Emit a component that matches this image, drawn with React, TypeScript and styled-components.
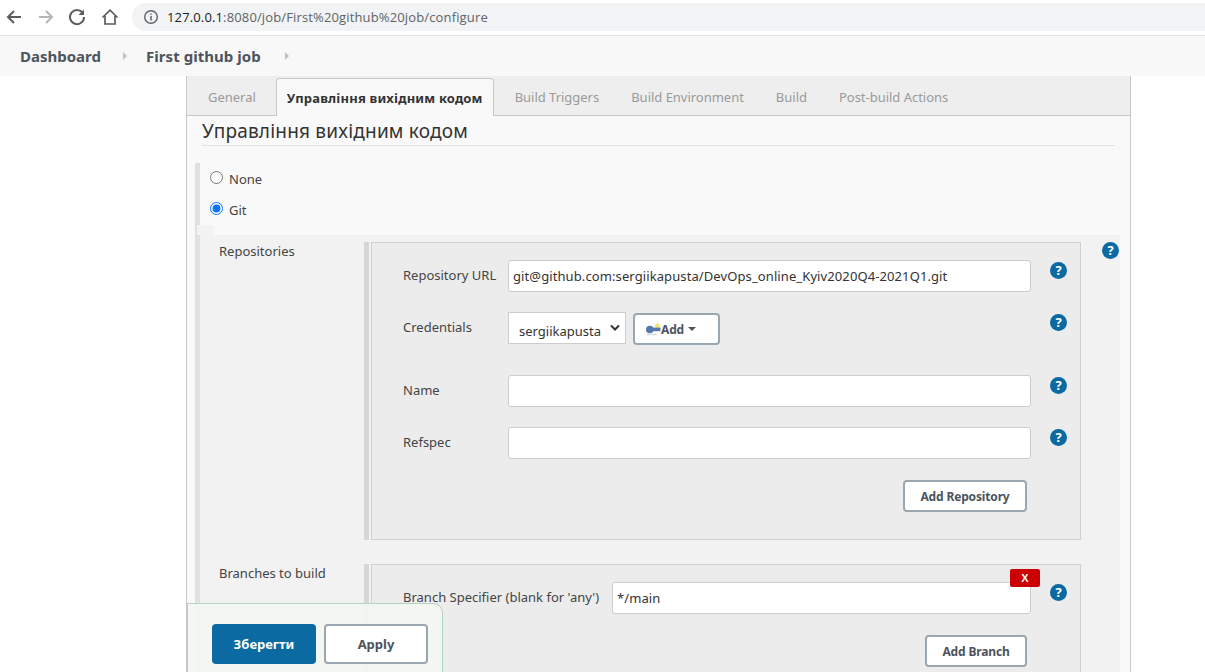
import React from "react";
import styled, { createGlobalStyle } from "styled-components";

const Global = createGlobalStyle`
  html, body { margin: 0; padding: 0; background: #fff; overflow: hidden; }
  * { box-sizing: border-box; }
  body { font-family: "Noto Sans", "Open Sans", Arial, sans-serif; color: #333; }
`;
const Page = styled.div`width: 1205px; height: 672px; overflow: hidden; position: relative; display: flex; flex-direction: column;`;
const BrowserBar = styled.div`height: 36px; flex: none; display: flex; align-items: center; background: #fff; border-bottom: 1px solid #dfe1e3; padding: 0 0 1px 4px;`;
const NavIcon = styled.svg`width: 20px; height: 20px; flex: none; margin-right: ${p => p.$gap}px; fill: none; stroke: ${p => p.$dim ? "#b4b7ba" : "#5a5d60"}; stroke-width: 2;`;
const Address = styled.div`flex: 1; height: 28px; background: #f1f3f4; border-radius: 14px 0 0 14px; display: flex; align-items: center; padding-left: 11px; font-family: "Open Sans", sans-serif; font-size: 13px; letter-spacing: .14px; color: #5f6368; margin-left: 2px;`;
const InfoIcon = styled.svg`width: 16px; height: 16px; margin-right: 8px; flex: none;`;
const Host = styled.span`color: #202124;`;
const Crumbs = styled.div`height: 40px; flex: none; background: #f8f8f8; display: flex; align-items: center; padding-left: 20px; font-size: 15px; font-weight: 700; color: #4d545d;`;
const Crumb = styled.span`margin-right: ${p => p.$gap}px; letter-spacing: ${p => p.$ls || 0}px;`;
const Caret = styled.i`width: 0; height: 0; border-left: 4px solid #c2c2c2; border-top: 4px solid transparent; border-bottom: 4px solid transparent; margin-right: ${p => p.$gap}px;`;
const Main = styled.div`width: 945px; margin-left: 186px; flex: 1; background: #f9f9f9; border-left: 1px solid #c8c8c8; border-right: 1px solid #c8c8c8;`;
const Tabs = styled.div`height: 40px; background: #eee; border-bottom: 1px solid #c8c8c8; display: flex; align-items: flex-end; padding-left: 5px; font-size: 13px;`;
const Tab = styled.div`
  height: ${p => p.$active ? "38px" : "37px"};
  padding: 0 ${p => p.$active ? "10px" : "16px"};
  margin: 0 ${p => p.$active ? "5px" : "0"} ${p => p.$active ? "-1px" : "0"} ${p => p.$active ? "4px" : "0"};
  display: flex; align-items: center;
  color: ${p => p.$active ? "#333" : "#9a9a9a"};
  font-weight: ${p => p.$active ? 700 : 400};
  letter-spacing: ${p => p.$active ? ".17px" : "-.02px"};
  background: ${p => p.$active ? "#f9f9f9" : "transparent"};
  border: ${p => p.$active ? "1px solid #c8c8c8" : "0"};
  border-bottom: 0;
  border-radius: 4px 4px 0 0;
`;
const Heading = styled.h2`margin: 0 15px 17px; height: 30px; font-size: 19px; font-weight: 400; line-height: 30px; color: #333; border-bottom: 1px solid #e2e2e2; letter-spacing: .2px;`;
const Section = styled.div`margin-left: 8px; border-left: 5px solid #e0e0e0; display: flex; flex-direction: column; height: 520px;`;
const RadioRow = styled.label`display: flex; flex: none; align-items: center; height: 31px; padding-left: 10px; font-size: 13px; color: #444;`;
const Radio = styled.input`margin: 0 6px 2px 0; width: 13px; height: 13px; accent-color: #0a75ff;`;
const Nested = styled.div`
  flex: none; margin-top: 10px; width: 920px; height: 440px; background: #f2f2f2; display: grid; grid-template-columns: 164px 717px 38px; align-content: start; padding-top: 7px; row-gap: 24px; position: relative;
  &::before { content: ""; position: absolute; left: -3px; top: -10px; width: 17px; height: 10px; background: #f3f3f3; }
`;
const SideLabel = styled.div`font-size: 13px; color: #444; line-height: 18px; padding-left: 19px;`;
const PanelWrap = styled.div`border-left: 5px solid #d6d6d6; padding-left: 2px; display: flex;`;
const Panel = styled.div`position: relative; width: 710px; height: ${p => p.$h}px; background: #ececec; border: 1px solid #d0d0d0; ${p => p.$open ? "border-bottom: 0;" : ""} padding: 17px 0 0 31px;`;
const FormRow = styled.div`display: flex; align-items: flex-start; height: ${p => p.$h}px;`;
const FieldLabel = styled.div`width: ${p => p.$w}px; flex: none; font-size: 13px; color: #444; line-height: 30px;`;
const TextInput = styled.div`width: ${p => p.$w}px; height: 32px; background: #fff; border: 1px solid #cdcdcd; border-radius: 3px; font-size: 13px; letter-spacing: .1px; line-height: 30px; padding-left: 4px; color: #333; flex: none;`;
const Help = styled.span`
  width: 17px; height: 17px; border-radius: 50%; background: #0b6aa2; color: #fff; font-size: 13px; font-weight: 700; line-height: 17px; text-align: center; flex: none; display: block;
  margin: ${p => p.$m};
`;
const SelectBox = styled.div`width: 118px; height: 32px; background: #fff; border: 1px solid #cdcdcd; font-size: 13px; padding-left: 10px; color: #333; display: flex; align-items: center; justify-content: space-between; padding-right: 5px; flex: none;`;
const SelectText = styled.span`display: block; height: 18px; line-height: 18px; margin-top: 5px; overflow: hidden;`;
const Chevron = styled.svg`width: 10px; height: 8px; fill: none; stroke: #333; stroke-width: 2;`;
const Button = styled.button`
  font-family: inherit; font-size: 12px; font-weight: 700; letter-spacing: -.15px; color: #4d545d; background: #fff; border: 2px solid #9aa7b0; border-radius: 4px; height: 32px; padding: 0; width: ${p => p.$w}px; flex: none; display: flex; align-items: center; justify-content: center;
`;
const AddCred = styled(Button)`margin: 1px 0 0 7px; width: 87px; justify-content: flex-start; padding-left: 11px;`;
const Key = styled.svg`width: 15px; height: 13px; flex: none;`;
const DropCaret = styled.i`width: 0; height: 0; border-top: 4px solid #4d545d; border-left: 4px solid transparent; border-right: 4px solid transparent; margin-left: 4px;`;
const ButtonRow = styled.div`display: flex; justify-content: flex-end; width: 624px; margin-top: -1px;`;
const Remove = styled.div`position: absolute; top: 4px; right: 40px; width: 30px; height: 18px; background: #cc0003; color: #fff; font-size: 11px; font-weight: 700; text-align: center; line-height: 18px; border-radius: 2px; font-family: "Liberation Sans", Arial, sans-serif;`;
const SaveBar = styled.div`position: absolute; left: 187px; top: 603px; width: 256px; height: 80px; background: rgba(244, 248, 241, .93); border: 1px solid #b3d4c0; border-radius: 0 10px 0 0; display: flex; gap: 8px; padding: 20px 0 0 24px;`;
const BigButton = styled.button`
  width: 104px; height: 40px; border-radius: 4px; font-family: inherit; font-size: 13px; font-weight: 700; padding: 0;
  background: ${p => p.$primary ? "#0b6aa2" : "#fff"};
  color: ${p => p.$primary ? "#fff" : "#4d545d"};
  border: ${p => p.$primary ? "0" : "2px solid #9aa7b0"};
`;

export default function App() {
  return (
    <Page>
      <Global />
      <BrowserBar>
        <NavIcon $gap={12} viewBox="0 0 20 20"><path d="M17 10H4M10 4l-6 6 6 6" /></NavIcon>
        <NavIcon $gap={11} $dim viewBox="0 0 20 20"><path d="M3 10h13M10 4l6 6-6 6" /></NavIcon>
        <NavIcon $gap={13} viewBox="0 0 20 20"><path d="M16 6.5A7 7 0 1 0 17 10" /><path d="M17 2.5V8h-5.5" fill="#5a5d60" stroke="none" /></NavIcon>
        <NavIcon $gap={10} viewBox="0 0 20 20" style={{ strokeWidth: 1.7 }}><path d="M2.5 10.5 10 3.2l7.5 7.3M5 9v8h10V9" /></NavIcon>
        <Address>
          <InfoIcon viewBox="0 0 16 16"><circle cx="8" cy="8" r="6.3" fill="none" stroke="#5f6368" strokeWidth="1.4" /><path d="M8 7v4.5M8 4.4v1.4" stroke="#5f6368" strokeWidth="1.5" /></InfoIcon>
          <Host>127.0.0.1</Host>:8080/job/First%20github%20job/configure
        </Address>
      </BrowserBar>
      <Crumbs>
        <Crumb $gap={22}>Dashboard</Crumb><Caret $gap={19} />
        <Crumb $gap={24} $ls={.05}>First github job</Crumb><Caret $gap={0} />
      </Crumbs>
      <Main>
        <Tabs>
          <Tab>General</Tab>
          <Tab $active>Управління вихідним кодом</Tab>
          <Tab>Build Triggers</Tab>
          <Tab>Build Environment</Tab>
          <Tab>Build</Tab>
          <Tab>Post-build Actions</Tab>
        </Tabs>
        <Heading>Управління вихідним кодом</Heading>
        <Section>
          <RadioRow><Radio type="radio" name="scm" readOnly />None</RadioRow>
          <RadioRow><Radio type="radio" name="scm" defaultChecked />Git</RadioRow>
          <Nested>
            <SideLabel>Repositories</SideLabel>
            <PanelWrap>
              <Panel $h={298}>
                <FormRow $h={52}>
                  <FieldLabel $w={105}>Repository URL</FieldLabel>
                  <TextInput $w={523}>git@github.com:sergiikapusta/DevOps_online_Kyiv2020Q4-2021Q1.git</TextInput>
                  <Help $m="2px 0 0 19px">?</Help>
                </FormRow>
                <FormRow $h={63}>
                  <FieldLabel $w={105}>Credentials</FieldLabel>
                  <SelectBox><SelectText>sergiikapusta</SelectText><Chevron viewBox="0 0 10 8"><path d="M1 1.5l4 4 4-4" /></Chevron></SelectBox>
                  <AddCred>
                    <Key viewBox="0 0 15 13"><circle cx="11.5" cy="3" r="2.4" fill="#f0e36f" /><circle cx="3.8" cy="6.5" r="3.8" fill="#5478ab" /><path d="M5 4.6h9.5v3.6H5z" fill="#5478ab" /><path d="M1 11.5h10" stroke="#d3d8de" strokeWidth="1.4" /></Key>
                    Add<DropCaret />
                  </AddCred>
                  <Help $m="2px 0 0 330px">?</Help>
                </FormRow>
                <FormRow $h={52}>
                  <FieldLabel $w={105}>Name</FieldLabel>
                  <TextInput $w={523} />
                  <Help $m="2px 0 0 19px">?</Help>
                </FormRow>
                <FormRow $h={54}>
                  <FieldLabel $w={105}>Refspec</FieldLabel>
                  <TextInput $w={523} />
                  <Help $m="2px 0 0 19px">?</Help>
                </FormRow>
                <ButtonRow><Button $w={124}>Add Repository</Button></ButtonRow>
              </Panel>
            </PanelWrap>
            <Help $m="0 0 0 21px">?</Help>
            <SideLabel>Branches to build</SideLabel>
            <PanelWrap>
              <Panel $h={130} $open>
                <FormRow $h={54}>
                  <FieldLabel $w={209}>Branch Specifier (blank for 'any')</FieldLabel>
                  <TextInput $w={419}>*/main</TextInput>
                  <Help $m="2px 0 0 19px">?</Help>
                </FormRow>
                <ButtonRow><Button $w={102}>Add Branch</Button></ButtonRow>
                <Remove>X</Remove>
              </Panel>
            </PanelWrap>
          </Nested>
        </Section>
      </Main>
      <SaveBar>
        <BigButton $primary>Зберегти</BigButton>
        <BigButton>Apply</BigButton>
      </SaveBar>
    </Page>
  );
}
